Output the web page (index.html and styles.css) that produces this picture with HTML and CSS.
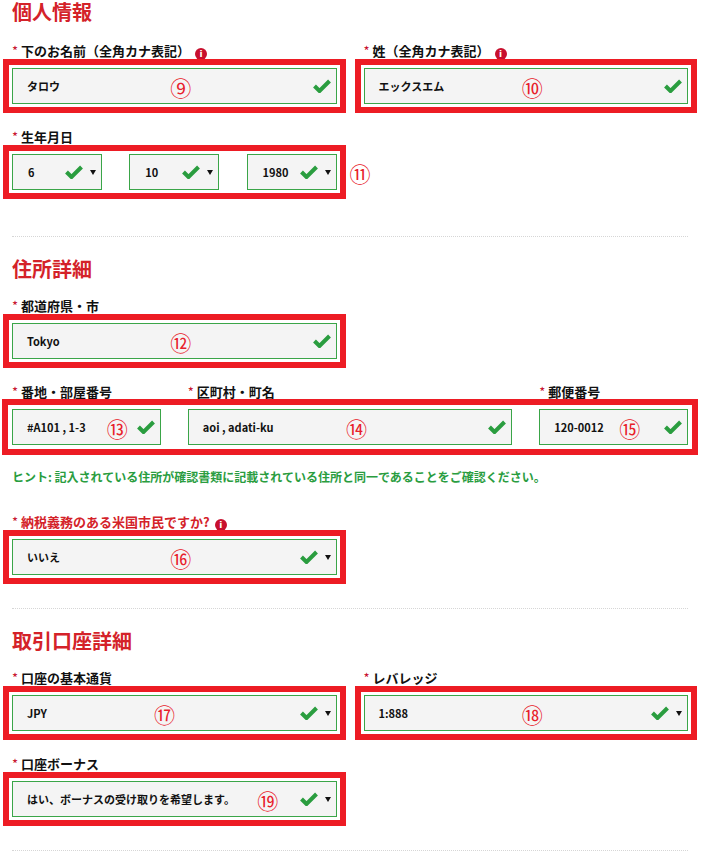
FILE: index.html
```html
<!DOCTYPE html>
<html lang="ja">
<head>
  <meta charset="UTF-8">
  <meta name="viewport" content="width=device-width, initial-scale=1.0">
  <title>口座開設フォーム</title>
  <link rel="stylesheet" href="styles.css">
</head>
<body>
  <div class="page">

    <section class="section">
      <h2 class="section-title">個人情報</h2>
      <div class="grid field-row">
        <div class="field span-6">
          <label class="label"><span class="req">*</span>下のお名前（全角カナ表記）<span class="info">i</span></label>
          <div class="mark-box">
            <div class="input">
              <span class="value">タロウ</span>
              <span class="mark">⑨</span>
              <svg class="check" viewBox="0 0 18 14"><polyline points="1.5,7 6.5,12 16.5,2"/></svg>
            </div>
          </div>
        </div>
        <div class="field span-6">
          <label class="label"><span class="req">*</span>姓（全角カナ表記）<span class="info">i</span></label>
          <div class="mark-box">
            <div class="input">
              <span class="value">エックスエム</span>
              <span class="mark">⑩</span>
              <svg class="check" viewBox="0 0 18 14"><polyline points="1.5,7 6.5,12 16.5,2"/></svg>
            </div>
          </div>
        </div>
      </div>

      <div class="grid field-row date-group">
        <div class="field date-field span-6">
          <label class="label"><span class="req">*</span>生年月日</label>
          <div class="date-row mark-box">
            <div class="input date-select">
              <span class="value">6</span>
              <svg class="check" viewBox="0 0 18 14"><polyline points="1.5,7 6.5,12 16.5,2"/></svg>
              <span class="arrow"></span>
            </div>
            <div class="input date-select">
              <span class="value">10</span>
              <svg class="check" viewBox="0 0 18 14"><polyline points="1.5,7 6.5,12 16.5,2"/></svg>
              <span class="arrow"></span>
            </div>
            <div class="input date-select">
              <span class="value">1980</span>
              <svg class="check" viewBox="0 0 18 14"><polyline points="1.5,7 6.5,12 16.5,2"/></svg>
              <span class="arrow"></span>
            </div>
          </div>
          <span class="mark mark-side">⑪</span>
        </div>
      </div>
    </section>

    <section class="section">
      <h2 class="section-title">住所詳細</h2>
      <div class="grid field-row">
        <div class="field span-6">
          <label class="label"><span class="req">*</span>都道府県・市</label>
          <div class="mark-box">
            <div class="input">
              <span class="value">Tokyo</span>
              <span class="mark">⑫</span>
              <svg class="check" viewBox="0 0 18 14"><polyline points="1.5,7 6.5,12 16.5,2"/></svg>
            </div>
          </div>
        </div>
      </div>

      <div class="address-group">
        <div class="grid">
          <label class="label span-3"><span class="req">*</span>番地・部屋番号</label>
          <label class="label span-6"><span class="req">*</span>区町村・町名</label>
          <label class="label span-3"><span class="req">*</span>郵便番号</label>
        </div>
        <div class="grid mark-box">
          <div class="input span-3">
            <span class="value">#A101 , 1-3</span>
            <span class="mark mark-far">⑬</span>
            <svg class="check" viewBox="0 0 18 14"><polyline points="1.5,7 6.5,12 16.5,2"/></svg>
          </div>
          <div class="input span-6">
            <span class="value">aoi , adati-ku</span>
            <span class="mark">⑭</span>
            <svg class="check" viewBox="0 0 18 14"><polyline points="1.5,7 6.5,12 16.5,2"/></svg>
          </div>
          <div class="input span-3">
            <span class="value">120-0012</span>
            <span class="mark mark-mid">⑮</span>
            <svg class="check" viewBox="0 0 18 14"><polyline points="1.5,7 6.5,12 16.5,2"/></svg>
          </div>
        </div>
      </div>
      <p class="hint">ヒント: 記入されている住所が確認書類に記載されている住所と同一であることをご確認ください。</p>

      <div class="grid field-row">
        <div class="field span-6">
          <label class="label label-alert"><span class="req">*</span>納税義務のある米国市民ですか?<span class="info">i</span></label>
          <div class="mark-box">
            <div class="input">
              <span class="value">いいえ</span>
              <span class="mark">⑯</span>
              <svg class="check" viewBox="0 0 18 14"><polyline points="1.5,7 6.5,12 16.5,2"/></svg>
              <span class="arrow"></span>
            </div>
          </div>
        </div>
      </div>
    </section>

    <section class="section">
      <h2 class="section-title">取引口座詳細</h2>
      <div class="grid field-row">
        <div class="field span-6">
          <label class="label"><span class="req">*</span>口座の基本通貨</label>
          <div class="mark-box">
            <div class="input">
              <span class="value">JPY</span>
              <span class="mark mark-near">⑰</span>
              <svg class="check" viewBox="0 0 18 14"><polyline points="1.5,7 6.5,12 16.5,2"/></svg>
              <span class="arrow"></span>
            </div>
          </div>
        </div>
        <div class="field span-6">
          <label class="label"><span class="req">*</span>レバレッジ</label>
          <div class="mark-box">
            <div class="input">
              <span class="value">1:888</span>
              <span class="mark">⑱</span>
              <svg class="check" viewBox="0 0 18 14"><polyline points="1.5,7 6.5,12 16.5,2"/></svg>
              <span class="arrow"></span>
            </div>
          </div>
        </div>
      </div>

      <div class="grid field-row">
        <div class="field span-6">
          <label class="label"><span class="req">*</span>口座ボーナス</label>
          <div class="mark-box">
            <div class="input">
              <span class="value">はい、ボーナスの受け取りを希望します。</span>
              <span class="mark mark-end">⑲</span>
              <svg class="check" viewBox="0 0 18 14"><polyline points="1.5,7 6.5,12 16.5,2"/></svg>
              <span class="arrow"></span>
            </div>
          </div>
        </div>
      </div>
    </section>

  </div>
</body>
</html>
```

FILE: styles.css
```css
* {
  box-sizing: border-box;
}
body {
  margin: 0;
  font-family: "Noto Sans CJK JP", "Noto Sans", sans-serif;
  color: #111;
  background: #fff;
}
.page {
  width: 676px;
  margin-left: 12px;
}
.section {
  padding-bottom: 8px;
  margin-bottom: 20px;
  border-bottom: 1px dotted #d6d6d6;
}
.section-title {
  margin: 0 0 17px;
  font-size: 20px;
  line-height: 24px;
  font-weight: 700;
  color: #d42229;
}
.section:first-child .section-title {
  margin-bottom: 19px;
}
.grid {
  display: grid;
  grid-template-columns: repeat(12, 1fr);
  column-gap: 27px;
}
.span-3 {
  grid-column: span 3;
}
.span-6 {
  grid-column: span 6;
}
.field-row {
  margin-bottom: 25px;
}
.date-group {
  margin-bottom: 38px;
}
.label {
  display: block;
  height: 16px;
  margin-bottom: 9px;
  font-size: 13px;
  line-height: 16px;
  font-weight: 700;
  white-space: nowrap;
}
.label-alert {
  color: #d42229;
}
.req {
  margin-right: 3px;
  color: #c8102e;
  font-weight: 400;
}
.info {
  display: inline-block;
  width: 12px;
  height: 12px;
  margin-left: 5px;
  border-radius: 50%;
  background: #c8102e;
  color: #fff;
  font-family: "DejaVu Sans", sans-serif;
  font-size: 9px;
  line-height: 12px;
  font-weight: 700;
  text-align: center;
  vertical-align: -1px;
}

/* red annotation frames */
.mark-box {
  outline: 6px solid #ed1c24;
  outline-offset: 3px;
}
.address-group .mark-box {
  outline-offset: 4px;
}

.input {
  position: relative;
  display: flex;
  align-items: center;
  height: 36px;
  padding: 0 5px 0 14px;
  background: #f4f4f4;
  border: 1px solid #3aa548;
  font-size: 11px;
  font-weight: 700;
}
.value {
  flex: 1;
  white-space: nowrap;
}
.check {
  flex: none;
  width: 18px;
  height: 14px;
}
.check polyline {
  fill: none;
  stroke: #2a9d3f;
  stroke-width: 4;
}
.arrow {
  flex: none;
  width: 0;
  height: 0;
  margin-left: 7px;
  border-left: 3px solid transparent;
  border-right: 3px solid transparent;
  border-top: 5px solid #111;
}

.date-field {
  position: relative;
}
.date-row {
  display: flex;
  justify-content: space-between;
}
.date-select {
  width: 90px;
  padding-left: 15px;
}

.mark {
  position: absolute;
  top: 50%;
  left: 52%;
  transform: translate(-50%, -45%);
  color: #e8202a;
  font-size: 21px;
  line-height: 1;
  font-weight: 400;
}
.mark-near {
  left: 47%;
}
.mark-mid {
  left: 61%;
}
.mark-far {
  left: 71%;
}
.mark-end {
  left: 79%;
}
.mark-side {
  top: 43px;
  left: calc(100% + 13px);
  transform: translateY(-45%);
}

.hint {
  margin: 24px 0 29px;
  font-size: 12px;
  line-height: 16px;
  font-weight: 700;
  color: #2a9d3f;
}
```
